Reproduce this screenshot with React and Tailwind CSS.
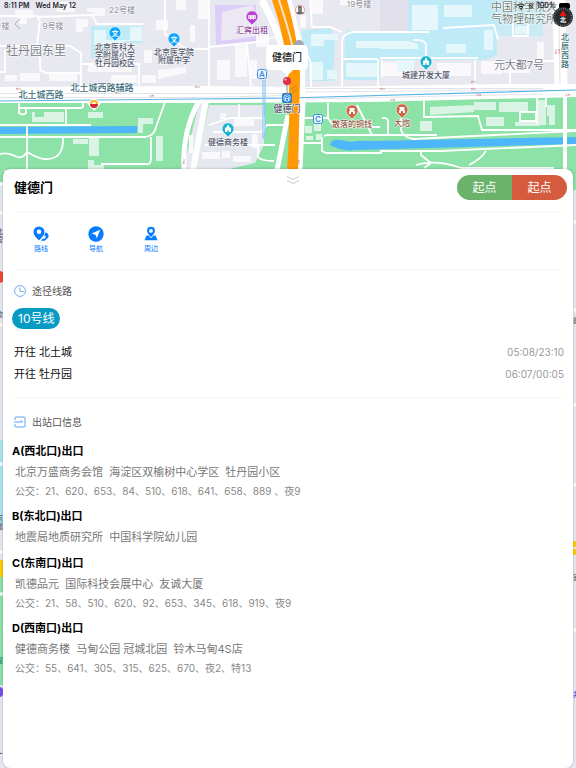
import React from "react";

const exits = [
	{
		name: "A(西北口)出口",
		places: "北京万盛商务会馆  海淀区双榆树中心学区  牡丹园小区",
		buses: "21、620、653、84、510、618、641、658、889 、夜9",
	},
	{
		name: "B(东北口)出口",
		places: "地震局地质研究所  中国科学院幼儿园",
	},
	{
		name: "C(东南口)出口",
		places: "凯德品元  国际科技会展中心  友诚大厦",
		buses: "21、58、510、620、92、653、345、618、919、夜9",
	},
	{
		name: "D(西南口)出口",
		places: "健德商务楼  马甸公园 冠城北园  铃木马甸4S店",
		buses: "55、641、305、315、625、670、夜2、特13",
	},
];

const directions = [
	{ to: "北土城", hours: "05:08/23:10" },
	{ to: "牡丹园", hours: "06:07/00:05" },
];

const Label = ({ x, y, size = 8, fill = "#50546a", weight = 500, children }) => (
	<text
		x={x}
		y={y}
		fontSize={size}
		fill={fill}
		fontWeight={weight}
		textAnchor="middle"
		stroke="#fff"
		strokeWidth="1"
		strokeLinejoin="round"
		paintOrder="stroke"
	>
		{children}
	</text>
);

const Pin = ({ x, y, fill, children }) => (
	<g transform={`translate(${x} ${y})`}>
		<path
			d="M0 8 L-3 5 A6 6 0 1 1 3 5 Z"
			fill={fill}
			stroke="#fff"
			strokeWidth=".6"
		/>
		{children}
	</g>
);

const Tower = () => (
	<path
		d="M-3 3V-1l2-1v-1.500l2-.500V-2l2 1v4H.6V1h-1.200v2z"
		fill="#fff"
	/>
);

const Gate = () => (
	<path
		d="M-2.500 -3H2.500V-1H2V0h1v3H1V1H-1v2H-3V0h1v-1h-.500z"
		fill="#fff"
	/>
);

const CityMap = () => (
	<svg
		viewBox="0 0 576 768"
		preserveAspectRatio="xMidYMin slice"
		className="absolute inset-0 h-full w-full"
		aria-hidden="true"
	>
		<rect width="576" height="768" fill="#e8e8f0" />

		{/* Campus districts */}
		<path
			d="M91 26h52l-1 17h-31v15H91zM302 30l29-2 4 14-2 39h-25l-1-21-6-14zM345 31h35V0h117v55l-12 5H380v20H344z"
			fill="#bfeaf7"
		/>
		<path d="M380 0h28v31h-28z" fill="#e2e0eb" />
		<path d="M497 0h46v36h-46z" fill="#c9ebf5" />
		<path d="M344 59h36v21h-36z" fill="#bfeaf7" />
		<path d="M215 5h41v36l-40 4z" fill="#dccdf9" />
		<path d="M222 12l31-7 4 31-36 5z" fill="#ebe8f3" />

		{/* Buildings */}
		<g fill="#fbf8fc">
			<path d="M15 10h18v8h-6v6h-8v-6h-4zM49 2h26v10H57v-5h-8zM87 8h18v8H93v-4h-6zM76 19h12v8h-5v5h-7zM5 75h12v6H5zM20 73h20v8H20zM49 73h28v8H49zM88 65h44v7H88zM111 75h26v8h-26zM142 75h14v8h-14zM158 70l28-3v6l-28 6zM144 50h8v13h-8zM156 20h12v10h-12zM176 0h10v10h-10zM190 25h5v17h-5zM198 0h10v19h-10z" />
			<path d="M217 60h13v20h-13zM235 45h12v32h-12zM250 60h7v19h-7zM256 31h13v16h-13zM300 15h6v13h-6zM310 0h13v14h-13zM340 0h30v5h-30zM383 62h24v14h-24zM437 63h34v13h-34zM481 61h22v13h-22zM537 42h7v17h-7zM504 66h26v7h-26z" />
		</g>
		<g fill="#e6f7fb">
			<path d="M94 30h12v10h24V27h12v14h-18v4H94zM309 62h14v18h-14zM327 70h10v9h-10zM311 34h27v6h-14v6h-13zM356 41h24v7h-24zM346 63h33v14h-33zM380 41h28l10 3v5h-38zM412 5h26v25h-26zM444 5h28v12h-28zM484 30h9v20h-9zM446 44h20v9h-20zM397 60h17v12h-17zM515 26h12v8h-12z" />
		</g>

		{/* Park */}
		<path
			d="M0 103h199l-16 67H0zM204 102h86v68h-97zM301 101l275-4v93H299z"
			fill="#8ce2a7"
		/>
		<path d="M209 105h55v40l-9 18-30 7h-30z" fill="#e6e8ef" />
		<path
			d="M0 127l137-1v7L0 134zM330 145q0-6 11-5l10 2q8-2 20-1l205-4v7l-220 6q-14 2-26-5z"
			fill="#4eb6fb"
		/>
		<g fill="#d9f4e4">
			<path d="M32 112h32v10H32zM88 112h15v6H88zM138 118h15v6h-10v9h-5zM73 139h15v5H73zM89 138h10v18H89zM88 160h6v5h10v4H88zM156 136h7v25h-7zM420 121h12v10h-12zM430 107l44-2v7l-44 3zM474 102h22v8h-22zM486 117h18v9h-18zM499 102h29v10h-29zM515 122h25v4h-25zM538 100h8v25h-8zM547 105h8v20h-6v-9h-2zM305 126h7v7h-7zM314 122h7v9h-7zM316 134h6v6h-6zM306 136h7v4h-7z" />
		</g>
		<path d="M35 111h9v6h-9z" fill="#8ce2a7" />
		<g fill="#fbf8fc">
			<path d="M220 113h6v6h-6zM234 117h20v9h-20zM222 151h8v7h-8zM202 152h18v7h-18zM233 156h18v6h-18zM252 134h6v14h-6zM189 135h4v18h-4z" />
		</g>

		{/* Minor roads */}
		<g fill="none" stroke="#fff" strokeWidth="1.800">
			<path d="M0 16h37l3 6-3 22-6 5M37 17l55-2 5 9h46M0 46h70l11 7v33M40 46v24l6 3h34M5 50v22H0M81 64h60M165 0v34l21 15h23M139 64v22M209 0v87M209 47l48-5 17-5M247 42l4 45M296 28l15 35v24M310 0l2 27h18l12 5M342 88V41q1-8 12-9h75M343 59h34M378 59v28M382 60v18M413 40q15-1 13 8v12M443 28l51-3 4 15M475 60v25M380 58h98M513 14v22h15V14M511 61h46M510 61v23" />
			<path d="M83 101v6l-2 1H19M19 102v11q4 3 7 0v-4M66 108v17M0 125h91M0 137h145q8-1 10-7l10-28M27 126v44M0 154q8-2 15 2t12-4q12 7 18 7 19 1 18-22M151 137v20q0 8-4 7h-46M209 125l21-7h34v14M213 132h48l6-7h18M205 145h70M239 104v14M258 145v12q3 4 16 4M303 118h25l5 7h25M303 143h19M328 119v-16M357 105l15 30M366 127h14M382 118q6-1 6 4v12M324 136l3-1h110M322 137v14l4 2h56M424 96v21l54-1 4 14h94M401 118v12q2 7 12 9l163-8M380 151h60l136-6M421 152v3l10 8-7 5M486 151q-5 8-17 14M416 165q20-6 45 3h93M520 112h16v9h-16zM537 95v29M546 95v12" />
		</g>

		{/* Main roads */}
		<path
			d="M0 87l198-1 110 1 200-3h68v13l-206 5-172 1H0z"
			fill="#fff"
		/>
		<path
			d="M0 93.500h286M0 97.500h200l86-2M303 92l250-2M303 88.500h240M303 99l240-5"
			fill="none"
			stroke="#dcdce6"
			strokeWidth=".8"
		/>
		<g fill="none" stroke="#fff">
			<path d="M199 101q-17 30-15 69" strokeWidth="5" />
			<path d="M206 101l-13 69" strokeWidth="6" />
			<path d="M288 115l-11 55" strokeWidth="5" />
			<path d="M302 60l1 42-3 68" strokeWidth="5" />
			<path d="M559 0l2 87" strokeWidth="13" />
			<path d="M565 90v80" strokeWidth="4" />
			<path d="M262 0q18 34 24 60M288 0l15 60" strokeWidth="7" />
		</g>
		<path d="M559 24l1 60" stroke="#e2e2ea" strokeWidth="1" />
		<path d="M0 101l198-2 90-1 288-8" fill="none" stroke="#58b4e6" strokeWidth="1.200" />
		<path d="M262 80v59h4V80z" fill="#8ac8f4" fillOpacity=".6" />
		<path
			d="M272 0h15q12 43 13 75l-2 95H287q3-43 2-85-3-46-17-85z"
			fill="#ff9a05"
		/>
		<path
			d="M279 0q13 40 15 55"
			fill="none"
			stroke="#f8e3c4"
			strokeWidth="2"
		/>
		<path d="M290 90l7-5M292 93l6-4" stroke="#c98323" strokeWidth="1" />
		<g stroke="#c98482" strokeWidth=".7" fill="none">
			<path d="M16 89h5m-5 0l2-1M115 93h5m-5 0l2-1M149 96h5m0 0l-2-1M195 87h5m-5 0l2-1M380 89h5m-5 0l2-1M390 100h5m0 0l-2-1M471 82h5m-5 0l2-1M471 89h5m-5 0l2-1M476 95h5m0 0l-2-1M565 95h5m0 0l-2-1M556 49v5m0 0l-1-2M559 49v5m0-5l1 2M299 160v5m0-5l-1 2M184 159v5m0 0l-1-2M292 137v5" />
		</g>

		{/* Strips that stay visible beside the panel */}
		<g>
			<path d="M0 170h4v12H0zM0 577h4v108H0zM572 170h4v14h-4z" fill="#8ce2a7" />
			<path d="M0 440h4v86H0z" fill="#aee5f2" />
			<path d="M0 560h4v17H0zM572 541h4v6h-4zM572 549h4v6h-4z" fill="#fc0" />
			<path d="M0 184h4M0 213h4M0 325h4M0 464h4M0 552h4M0 594h4M0 690h4M572 222h4M572 310h4M572 405h4M572 485h4M572 630h4" stroke="#fff" strokeWidth="3" />
			<circle cx="-1" cy="277" r="6" fill="#f04731" />
			<circle cx="-1" cy="692" r="5" fill="#754ded" />
			<g fontSize="7" fill="#565a66" fontWeight="500">
				<text x="-4" y="234">北</text>
				<text x="-4" y="242">营</text>
				<text x="-4" y="317">欧</text>
				<text x="-4" y="521">京</text>
				<text x="-4" y="529">都</text>
				<text x="-4" y="663" fill="#079467">双</text>
				<text x="-4" y="758">广</text>
				<text x="573" y="323">前</text>
				<text x="573" y="580">家</text>
				<text x="573" y="697" fill="#754ded">井</text>
			</g>
		</g>

		{/* Street and area names */}
		<Label x="122" y="13" size="8" fill="#9a9ba5">22号楼</Label>
		<Label x="-1" y="29" size="8" fill="#9a9ba5">8号楼</Label>
		<Label x="53" y="29" size="8" fill="#9a9ba5">9号楼</Label>
		<Label x="359" y="7" size="8" fill="#9a9ba5">19号楼</Label>
		<Label x="36" y="55" size="12" fill="#7b7e89" weight={400}>牡丹园东里</Label>
		<Label x="519" y="69" size="11" fill="#7b7e89" weight={400}>元大都7号</Label>
		<Label x="41" y="98" size="9" fill="#3d6d7b">北土城西路</Label>
		<Label x="102" y="91" size="9" fill="#3d6d7b">北土城西路辅路</Label>
		{["北", "辰", "西", "路"].map((ch, i) => (
			<Label key={ch} x="565" y={40 + i * 9} size="8" fill="#3d6d7b">{ch}</Label>
		))}
		<Label x="524" y="11" size="11" fill="#6d837f" weight={400}>中国科学院大</Label>
		<Label x="524" y="23" size="11" fill="#6d837f" weight={400}>气物理研究所</Label>

		{/* Points of interest */}
		<Pin x="115" y="33" fill="#12a6fb">
			<text y="2.500" fontSize="7" fill="#fff" textAnchor="middle" fontWeight="700">文</text>
		</Pin>
		<Label x="115" y="50">北京医科大</Label>
		<Label x="115" y="58">学附属小学</Label>
		<Label x="115" y="66">牡丹园校区</Label>
		<Pin x="174" y="39" fill="#12a6fb">
			<text y="2.500" fontSize="7" fill="#fff" textAnchor="middle" fontWeight="700">文</text>
		</Pin>
		<Label x="174" y="55">北京医学院</Label>
		<Label x="174" y="63">附属中学</Label>
		<Pin x="252" y="17" fill="#b942d4">
			<path d="M-4-2h8v4H2v1H1V2h-2v1h-1V2h-2zM-2.500-1v2M0-1v2M2.500-1v2" fill="#fff" stroke="#b942d4" strokeWidth=".5" />
		</Pin>
		<Label x="252" y="33" fill="#8f4a9f">汇宾出租</Label>
		<Pin x="228" y="129" fill="#19b4cd"><Tower /></Pin>
		<Label x="228" y="145">健德商务楼</Label>
		<Pin x="426" y="62" fill="#19b4cd"><Tower /></Pin>
		<Label x="426" y="78">城建开发大厦</Label>
		<Pin x="352" y="111" fill="#cd6746"><Gate /></Pin>
		<Label x="352" y="127" fill="#965743">散落的铜钱</Label>
		<Pin x="402" y="110" fill="#cd6746"><Gate /></Pin>
		<Label x="402" y="126" fill="#965743">大炮</Label>
		<g transform="translate(94 104)">
			<path d="M-9-3h18L0 7z" fill="#fff" />
			<circle r="5" fill="#fff" />
			<path d="M-4 0a4 4 0 0 1 8 0z" fill="#ffb51b" />
			<path d="M-4 0a4 4 0 0 0 8 0z" fill="#d82432" />
			<path d="M-2 0a2 2 0 0 1 4 0z" fill="#fff" />
		</g>
		<g fill="#eef8ff" stroke="#3a8de0" strokeWidth="1">
			<rect x="257.500" y="69.500" width="9" height="9" rx="2" />
			<rect x="313.500" y="114.500" width="9" height="9" rx="2" />
		</g>
		<g fontSize="8" fontWeight="600" fill="#3a8de0" textAnchor="middle">
			<text x="262" y="77">A</text>
			<text x="318" y="122">C</text>
		</g>
		<circle cx="300" cy="10" r="4.500" fill="#fff" stroke="#e5888d" strokeWidth=".8" />
		<path d="M299 6v8M296.500 13h7M299 7h2v6" fill="none" stroke="#333" strokeWidth="1.200" />
		<circle cx="299" cy="45" r="5" fill="#a2a8b5" />

		{/* Selected station */}
		<Label x="287" y="112" size="9">健德门</Label>
		<rect x="282" y="93" width="10" height="10" rx="2" fill="#237fd9" />
		<circle cx="287" cy="98" r="3.300" fill="none" stroke="#fff" strokeWidth=".8" />
		<path d="M285.500 101v-4l1.500-1 1.500 1v4M285.500 98.500h3" fill="none" stroke="#fff" strokeWidth=".7" />
		<path d="M287 83v13" stroke="#777" strokeWidth=".8" />
		<circle cx="287" cy="81" r="4" fill="#e02d4d" />
		<circle cx="285.500" cy="79.500" r="1.100" fill="#fbc4ca" />
		<path
			d="M271 45h32q5 0 5 5v15q0 5-5 5h-10l-6 6-6-6h-10q-5 0-5-5V50q0-5 5-5z"
			fill="#fff"
		/>
		<text x="287" y="61" fontSize="10" fontWeight="500" fill="#222" textAnchor="middle">健德门</text>
	</svg>
);

const Compass = () => (
	<svg viewBox="0 0 20 20" className="h-5 w-5" aria-hidden="true">
		<circle cx="10" cy="10" r="10" fill="#27292c" />
		<circle
			cx="10"
			cy="10"
			r="8.500"
			fill="none"
			stroke="#aaa"
			strokeWidth="1.500"
			strokeDasharray=".500 1.725"
		/>
		<path d="M10 3l3.500 6h-7z" fill="#f2130d" />
		<text x="10" y="15" fontSize="6" fill="#fff" fontWeight="600" textAnchor="middle">北</text>
	</svg>
);

const RouteIcon = () => (
	<svg viewBox="0 0 16 16" className="h-4 w-4" fill="#087bff" aria-hidden="true">
		<path fillRule="evenodd" d="M6 .500a5.500 5.500 0 0 1 5.500 5.500C11.500 9 9 11.500 6.500 14Q6 14.500 5.500 14C3 11.500.500 9 .500 6A5.500 5.500 0 0 1 6 .500zm0 3a2.300 2.300 0 1 0 0 4.600A2.300 2.300 0 0 0 6 3.500z" />
		<path d="M12.300 6.500a3.300 3.300 0 0 1 2.200 5.700l-2.700 2.600H7.800l2.200-2.200 1.800.2 1.200-2-1.800-1.200z" />
	</svg>
);

const NavigateIcon = () => (
	<svg viewBox="0 0 16 16" className="h-4 w-4" aria-hidden="true">
		<circle cx="8" cy="8" r="7.700" fill="#087bff" />
		<path d="M12.200 3.800L8.800 12.200 7.500 8.700 3.600 7.500z" fill="#fff" />
	</svg>
);

const NearbyIcon = () => (
	<svg viewBox="0 0 16 16" className="h-4 w-4" fill="#087bff" aria-hidden="true">
		<path fillRule="evenodd" d="M8 .800a4 4 0 0 1 4 4C12 7 10 9 8 11.200 6 9 4 7 4 4.800a4 4 0 0 1 4-4zm0 2.200a1.900 1.900 0 1 0 0 3.800A1.900 1.900 0 0 0 8 3z" />
		<path d="M3.500 9.500h2L8 12.300l2.500-2.800h2l2 4.800h-13z" />
	</svg>
);

const actions = [
	{ label: "路线", Icon: RouteIcon },
	{ label: "导航", Icon: NavigateIcon },
	{ label: "周边", Icon: NearbyIcon },
];

const StatusBar = () => (
	<div className="flex h-3 items-center justify-between pl-1 pr-1.5 text-[7px] font-semibold leading-3 text-[#24252b]">
		<div className="flex gap-1.5">
			<span>8:11 PM</span>
			<span>Wed May 12</span>
		</div>
		<div className="flex items-center gap-[3px]">
			<svg viewBox="0 0 8 7" className="h-[7px] w-2" fill="none" stroke="#111" aria-hidden="true">
				<path d="M.5 2.500q3.500-3 7 0M2 4.300q2-1.700 4 0" strokeWidth="1.200" />
				<circle cx="4" cy="6" r=".8" fill="#111" stroke="none" />
			</svg>
			<svg viewBox="0 0 6 6" className="h-1.5 w-1.5" fill="none" stroke="#333" strokeWidth=".8" aria-hidden="true">
				<circle cx="3" cy="3" r="2" />
				<path d="M1 1l4 4" />
			</svg>
			<span>100%</span>
			<span className="h-1.5 w-[11px] rounded-xs bg-black" />
		</div>
	</div>
);

const SectionTitle = ({ icon, children }) => (
	<h2 className="flex items-center gap-1.5 pl-[11px] text-[10px] leading-4 text-[#555]">
		{icon}
		{children}
	</h2>
);

const StationPanel = () => (
	<main className="relative mx-[3px] flex-1 rounded-lg bg-white pb-10 shadow-[0_0_3px_rgba(60,60,80,0.35)]">
		<div className="flex items-start justify-between pl-[11px] pr-[6px] pt-1.5">
			<h1 className="pt-0.5 text-[13px] font-semibold leading-5 text-black">健德门</h1>
			<div className="flex overflow-hidden rounded-full text-[12px] leading-[25px] text-white">
				<button type="button" className="w-[55px] bg-[#6bb36b]">起点</button>
				<button type="button" className="w-[55px] bg-[#d45b3e]">起点</button>
			</div>
		</div>
		<button type="button" aria-label="收起" className="absolute left-1/2 top-1.5 -ml-0.5">
			<svg viewBox="0 0 14 10" className="h-2.5 w-3.5" fill="none" stroke="#ccc" aria-hidden="true">
				<path d="M1 1.500L7 4.500l6-3M1 5.500L7 8.500l6-3" />
			</svg>
		</button>

		<div className="mx-[11px] mt-3 flex h-[58px] items-center gap-[25px] border-y border-[#f7f7f7] pb-0.5 pl-3">
			{actions.map(({ label, Icon }) => (
				<button
					key={label}
					type="button"
					className="flex w-[30px] flex-col items-center gap-0.5 text-[7px] leading-[10px] text-[#087bff]"
				>
					<Icon />
					{label}
				</button>
			))}
		</div>

		<section className="pt-[13px]">
			<SectionTitle
				icon={
					<svg viewBox="0 0 12 12" className="h-3 w-3" fill="none" stroke="#6faef2" aria-hidden="true">
						<circle cx="6" cy="6" r="5.400" />
						<path d="M6 2.500V6.500h3.500" />
					</svg>
				}
			>
				途径线路
			</SectionTitle>
			<button
				type="button"
				className="ml-[9px] mt-[9px] block h-[21px] rounded-full bg-[#079bc3] px-1.5 text-[12px] leading-[21px] text-white"
			>
				10号线
			</button>
			<ul className="mx-[9px] mt-3 border-b border-[#f7f7f7] pb-3">
				{directions.map(({ to, hours }) => (
					<li key={to} className="flex h-[22px] items-center justify-between pl-0.5 text-[11px] text-[#111]">
						<span>开往 {to}</span>
						<span className="text-[10px] text-[#999]">{hours}</span>
					</li>
				))}
			</ul>
		</section>

		<section className="pt-4">
			<SectionTitle
				icon={
					<svg viewBox="0 0 12 12" className="h-3 w-3" fill="none" stroke="#58a3f5" aria-hidden="true">
						<path d="M1 4V2q0-1 1-1h8q1 0 1 1v8q0 1-1 1H2q-1 0-1-1V8M0 6h8.500M7 4.500L8.500 6" />
					</svg>
				}
			>
				出站口信息
			</SectionTitle>
			<div className="mt-[10px] flex flex-col gap-[5px]">
				{exits.map(({ name, places, buses }) => (
					<article key={name} className="pl-[9px]">
						<h3 className="text-[11px] font-bold leading-[22px] text-black">{name}</h3>
						<p className="whitespace-pre-wrap pl-[3px] text-[11px] leading-5 text-[#777]">{places}</p>
						{buses && (
							<p className="pl-[3px] text-[10px] leading-[18px] text-[#888]">公交：{buses}</p>
						)}
					</article>
				))}
			</div>
		</section>
	</main>
);

const App = () => (
	<div
		lang="zh-CN"
		className="relative flex min-h-screen flex-col overflow-hidden font-['Inter','Noto_Sans_CJK_SC',sans-serif]"
	>
		<CityMap />
		<header className="relative h-[169px]">
			<StatusBar />
			<div className="flex items-start justify-between pl-3 pr-[3px]">
				<button type="button" aria-label="返回" className="mt-1.5">
					<svg viewBox="0 0 12 12" className="h-3 w-3" fill="none" stroke="#aaabb3" aria-hidden="true">
						<path d="M8 1L3 6l5 5" />
					</svg>
				</button>
				<button type="button" aria-label="指南针" className="-mt-[5px]">
					<Compass />
				</button>
			</div>
		</header>
		<StationPanel />
	</div>
);

export default App;
